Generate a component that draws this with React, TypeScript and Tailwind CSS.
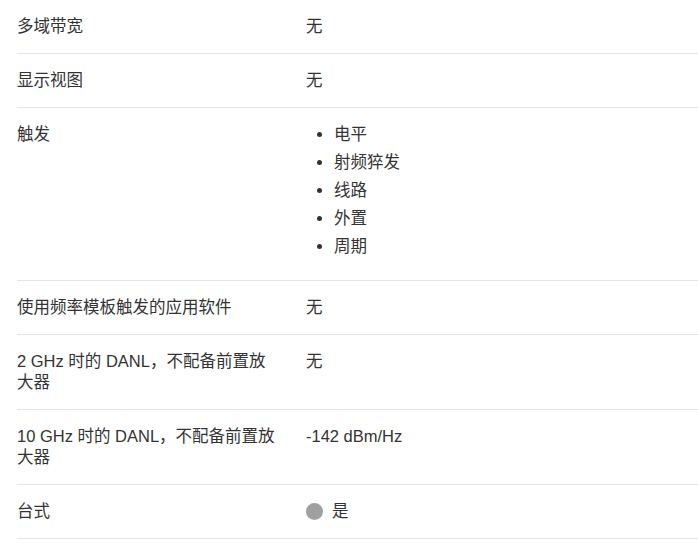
import React from "react";

const font = { fontFamily: '"Liberation Sans", Arial, "Noto Sans CJK SC", sans-serif' };

function Row({ label, children }: { label: string; children: React.ReactNode }) {
  return (
    <div className="flex border-b border-[#e5e5e5] py-4">
      <div className="w-[289px] shrink-0 pr-[27px]">{label}</div>
      <div className="flex-1">{children}</div>
    </div>
  );
}

export default function App() {
  const triggers = ["电平", "射频猝发", "线路", "外置", "周期"];
  return (
    <div className="bg-white w-[698px] h-[557px] overflow-hidden" style={font}>
      <div className="ml-[17px] text-[16.5px] leading-[21px] text-[#333333]">
        <Row label="多域带宽">无</Row>
        <Row label="显示视图">无</Row>
        <Row label="触发">
          <ul className="list-disc pl-[28px]">
            {triggers.map((t) => (
              <li key={t} className="mb-[7px]">{t}</li>
            ))}
          </ul>
        </Row>
        <Row label="使用频率模板触发的应用软件">无</Row>
        <Row label="2 GHz 时的 DANL，不配备前置放大器">无</Row>
        <Row label="10 GHz 时的 DANL，不配备前置放大器">-142 dBm/Hz</Row>
        <Row label="台式">
          <div className="flex items-center">
            <span className="inline-block w-[17px] h-[17px] rounded-full bg-[#a0a0a0] mr-[9px]" />
            <span>是</span>
          </div>
        </Row>
      </div>
    </div>
  );
}
